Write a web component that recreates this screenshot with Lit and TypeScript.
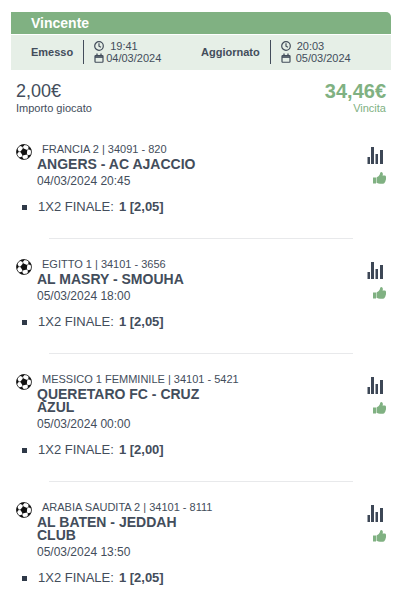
import { LitElement, html, svg, css } from "lit";
import { customElement, property } from "lit/decorators.js";

interface Match {
  league: string;
  teams: string;
  date: string;
  market: string;
  pick: string;
}

const matches: Match[] = [
  { league: "FRANCIA 2 | 34091 - 820", teams: "ANGERS - AC AJACCIO", date: "04/03/2024 20:45", market: "1X2 FINALE:", pick: "1 [2,05]" },
  { league: "EGITTO 1 | 34101 - 3656", teams: "AL MASRY - SMOUHA", date: "05/03/2024 18:00", market: "1X2 FINALE:", pick: "1 [2,05]" },
  { league: "MESSICO 1 FEMMINILE | 34101 - 5421", teams: "QUERETARO FC - CRUZ AZUL", date: "05/03/2024 00:00", market: "1X2 FINALE:", pick: "1 [2,00]" },
  { league: "ARABIA SAUDITA 2 | 34101 - 8111", teams: "AL BATEN - JEDDAH CLUB", date: "05/03/2024 13:50", market: "1X2 FINALE:", pick: "1 [2,05]" },
];

const clockIcon = html`<svg width="10" height="10" viewBox="0 0 20 20" aria-hidden="true">
  <circle cx="10" cy="10" r="8.6" fill="none" stroke="currentColor" stroke-width="2.4" />
  <path d="M10 4.5V10.5L14 12.5" fill="none" stroke="currentColor" stroke-width="2.4" />
</svg>`;

const calendarIcon = html`<svg width="10" height="10" viewBox="0 0 20 20" aria-hidden="true">
  <rect x="2" y="5" width="16" height="13.5" rx="1.5" fill="none" stroke="currentColor" stroke-width="2.4" />
  <path d="M2 8H18" stroke="currentColor" stroke-width="3.4" />
  <path d="M6 1V5M14 1V5" stroke="currentColor" stroke-width="2.6" />
</svg>`;

const spokes = [0, 72, 144, 216, 288].map(
  (a) => svg`<g transform="rotate(${a} 16 16)">
    <path d="M16 11V5" stroke="#111" stroke-width="1" />
    <path d="M10.500 2Q16 0 21.500 2L16 5.800Z" fill="#111" />
  </g>`
);

const ballIcon = html`<svg width="16" height="16" viewBox="0 0 32 32" aria-hidden="true">
  <circle cx="16" cy="16" r="15" fill="#fff" stroke="#111" stroke-width="1.6" />
  <g transform="rotate(-14 16 16)">
    ${spokes}
    <path d="M16 8.500L23.100 13.700L20.400 22.100H11.600L8.900 13.700Z" fill="#111" />
  </g>
</svg>`;

const chartIcon = html`<svg width="16" height="17" viewBox="0 0 16 17" aria-hidden="true">
  <path d="M0.500 10h2.500v7H0.500zM4 0h3v17H4zM8.500 7h2.500v10H8.500zM13 3h3v14H13z" fill="currentColor" />
</svg>`;

const thumbIcon = html`<svg width="13" height="12" viewBox="0 0 26 24" role="img" aria-label="Vinto">
  <path d="M0 11H6V23H0Z" fill="currentColor" />
  <path d="M7 11L11.500 8Q14 5.500 14.500 1.500Q15 0 17 0Q19.800 .500 19.800 4Q19.800 5.500 19 7H24Q26 7.500 26 10V14Q25.800 16 25 17.500Q24.800 19.500 23.500 21Q22.500 23.500 19.500 23.500H14Q11 23.500 7 21.500Z" fill="currentColor" />
</svg>`;

@customElement("bet-match")
export class BetMatch extends LitElement {
  @property({ attribute: false }) match!: Match;

  static styles = css`
    :host {
      display: block;
    }
    .row {
      display: flex;
      align-items: flex-start;
      gap: 5px;
      padding: 0 5px;
    }
    .ball {
      display: flex;
      padding-top: 2px;
    }
    .info {
      flex: 1;
      min-width: 0;
    }
    .league {
      padding-left: 5px;
      font-size: 11px;
      line-height: 14px;
    }
    .teams {
      margin: 2px 0 0;
      max-width: 55%;
      font-size: 14px;
      line-height: 13px;
      font-weight: bold;
    }
    .date {
      margin-top: 3px;
      font-size: 12px;
      line-height: 14px;
    }
    .actions {
      display: flex;
      flex-direction: column;
      align-items: flex-end;
      gap: 8px;
      padding-top: 5px;
    }
    .stats {
      display: flex;
      margin: 0 3px 0 0;
      padding: 0;
      border: 0;
      background: none;
      color: #3d4756;
      cursor: pointer;
    }
    .thumb {
      display: flex;
      color: #80b182;
    }
    .picks {
      margin: 11px 0 0;
      padding: 0 0 0 11px;
      list-style: none;
      font-size: 13px;
      line-height: 16px;
    }
    .pick {
      display: flex;
      align-items: center;
    }
    .pick::before {
      content: "";
      width: 5px;
      height: 5px;
      margin-right: 11px;
      background: #2f3948;
    }
    .value {
      margin-left: 5px;
    }
  `;

  render() {
    const m = this.match;
    return html`
      <div class="row">
        <span class="ball">${ballIcon}</span>
        <div class="info">
          <div class="league">${m.league}</div>
          <h2 class="teams">${m.teams}</h2>
          <div class="date">${m.date}</div>
        </div>
        <div class="actions">
          <button class="stats" type="button" aria-label="Statistiche">${chartIcon}</button>
          <span class="thumb">${thumbIcon}</span>
        </div>
      </div>
      <ul class="picks">
        <li class="pick"><span>${m.market}</span><b class="value">${m.pick}</b></li>
      </ul>
    `;
  }
}

@customElement("app-root")
export class AppRoot extends LitElement {
  static styles = css`
    :host {
      display: block;
      padding: 12px 10px 10px 11px;
      background: #fff;
      color: #434d5b;
      font-family: "Liberation Sans", Arial, sans-serif;
    }
    .status {
      margin: 0;
      padding: 0 20px;
      border-radius: 0 5px 0 0;
      background: #80b182;
      color: #fff;
      font-size: 14px;
      line-height: 22px;
    }
    .times {
      display: grid;
      grid-template-columns: 170fr 190fr;
      margin-top: 1px;
      padding: 5px 0 6px 20px;
      background: #e6efe7;
      font-size: 11px;
      line-height: 12px;
    }
    .stamp {
      display: flex;
      align-items: center;
    }
    .label {
      font-weight: bold;
    }
    .when {
      margin-left: 10px;
      padding-left: 10px;
      border-left: 1px solid #434d5b;
    }
    .line {
      display: grid;
      grid-template-columns: 10px auto;
      align-items: center;
      column-gap: 2px;
    }
    .hour {
      padding-left: 4px;
    }
    .wide .line {
      column-gap: 5px;
    }
    .wide .hour {
      padding-left: 1px;
    }
    .amounts {
      display: flex;
      justify-content: space-between;
      padding: 10px 5px 0;
      font-size: 11px;
      line-height: 13px;
    }
    .sum {
      font-size: 18px;
      line-height: 22px;
    }
    .win {
      color: #80b182;
      text-align: right;
    }
    .win .sum {
      font-size: 20px;
      font-weight: bold;
    }
    .matches {
      padding-top: 27px;
    }
    .divider {
      height: 1px;
      margin: 23px 38px 18px;
      border: 0;
      background: #e8e9eb;
    }
  `;

  private stamp(label: string, hour: string, day: string, wide: boolean) {
    return html`<div class="stamp ${wide ? "wide" : ""}">
      <span class="label">${label}</span>
      <div class="when">
        <div class="line">${clockIcon}<span class="hour">${hour}</span></div>
        <div class="line">${calendarIcon}<span>${day}</span></div>
      </div>
    </div>`;
  }

  render() {
    return html`
      <h1 class="status">Vincente</h1>
      <div class="times">
        ${this.stamp("Emesso", "19:41", "04/03/2024", false)}
        ${this.stamp("Aggiornato", "20:03", "05/03/2024", true)}
      </div>
      <div class="amounts">
        <div>
          <div class="sum">2,00€</div>
          <div>Importo giocato</div>
        </div>
        <div class="win">
          <div class="sum">34,46€</div>
          <div>Vincita</div>
        </div>
      </div>
      <div class="matches">
        ${matches.map(
          (m, i) => html`${i ? html`<hr class="divider" />` : ""}<bet-match .match=${m}></bet-match>`
        )}
      </div>
    `;
  }
}
